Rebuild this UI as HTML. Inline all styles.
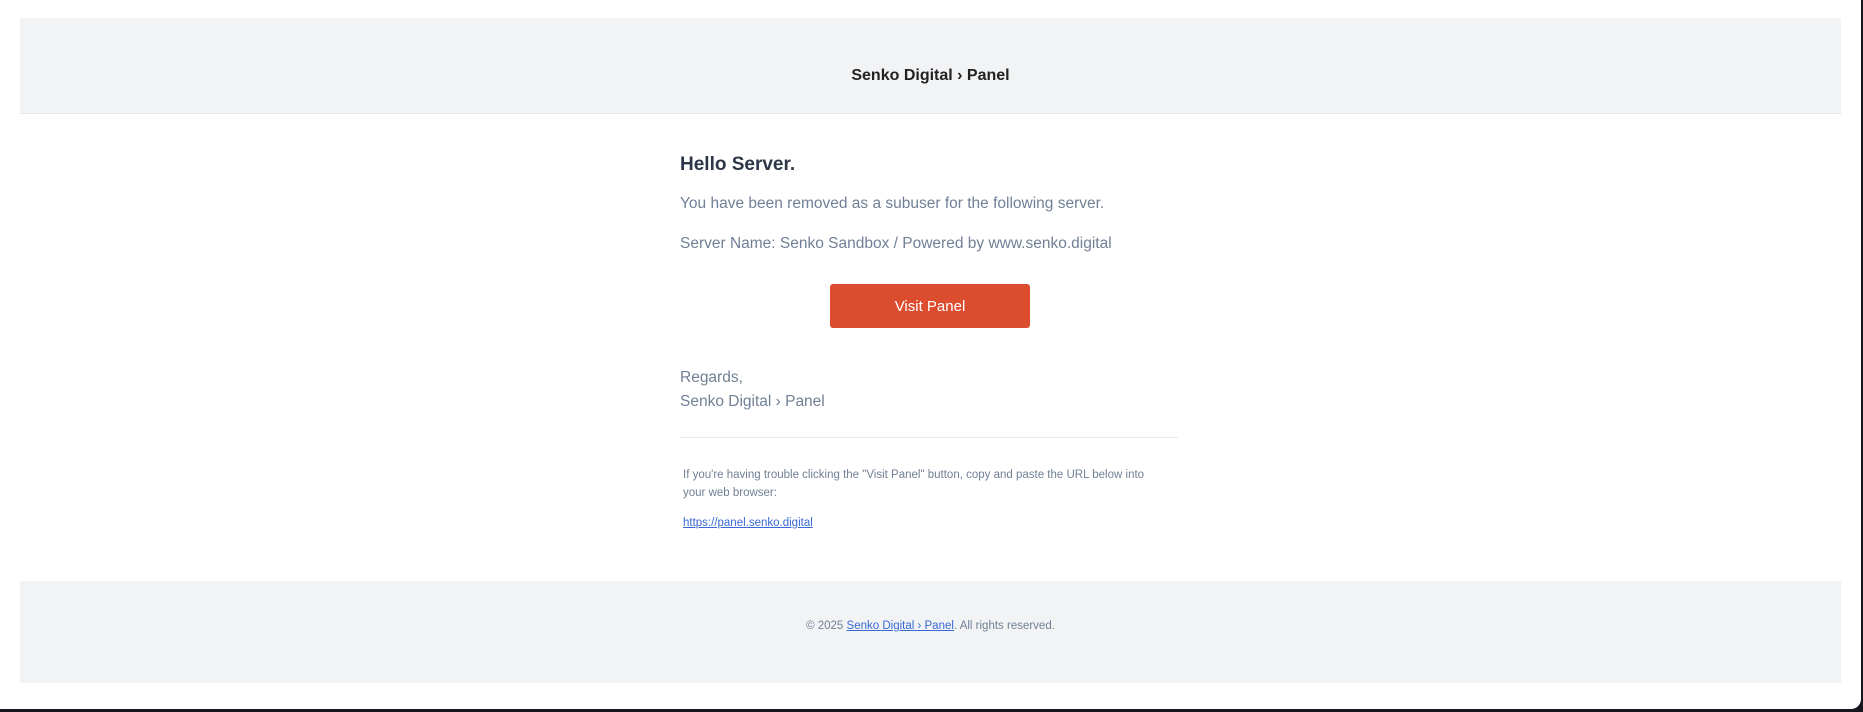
<!DOCTYPE html>
<html><head><meta charset="utf-8"><style>
html,body{margin:0;padding:0;width:1863px;height:712px;overflow:hidden;background:#16161f;}
.win{position:absolute;left:0;top:0;width:1861px;height:709px;background:#fff;border-radius:0 0 10px 0;}
.hdr{position:absolute;left:20px;top:18px;width:1821px;height:95px;background:#f2f3f5;border-bottom:1px solid #e8e9ec;}
.hdr div{position:absolute;left:0;right:0;top:49px;text-align:center;font:bold 16px "Liberation Sans",Arial,sans-serif;color:#222;}
.t{position:absolute;left:680px;font-family:"Liberation Sans",Arial,sans-serif;color:#718096;white-space:nowrap;}
.h{font-weight:bold;font-size:19px;color:#2d3748;top:154px;}
.p{font-size:15.5px;}
.btn{position:absolute;left:830px;top:284px;width:200px;height:44px;background:#dc4d2f;border-radius:3px;color:#fff;font:15px "Liberation Sans",Arial,sans-serif;text-align:center;line-height:46px;}
.hr{position:absolute;left:680px;top:437px;width:498px;height:1px;background:#e8e9ec;}
.s{font-size:11.5px;left:683px;}
a{color:#3869d4;text-decoration:underline;}
.ftr{position:absolute;left:20px;top:581px;width:1821px;height:102px;background:#f2f3f5;}
.ftr div{position:absolute;left:0;right:0;top:39px;text-align:center;font:11.5px "Liberation Sans",Arial,sans-serif;color:#718096;}
</style></head><body>
<div class="win">
<div class="hdr"><div>Senko Digital › Panel</div></div>
<div class="t h">Hello Server.</div>
<div class="t p" style="top:195px">You have been removed as a subuser for the following server.</div>
<div class="t p" style="top:235px">Server Name: Senko Sandbox / Powered by www.senko.digital</div>
<div class="btn">Visit Panel</div>
<div class="t p" style="top:369px">Regards,</div>
<div class="t p" style="top:393px">Senko Digital › Panel</div>
<div class="hr"></div>
<div class="t s" style="top:469px">If you're having trouble clicking the "Visit Panel" button, copy and paste the URL below into</div>
<div class="t s" style="top:487px">your web browser:</div>
<div class="t s" style="top:517px"><a>https://panel.senko.digital</a></div>
<div class="ftr"><div>© 2025 <a>Senko Digital › Panel</a>. All rights reserved.</div></div>
</div>
</body></html>
